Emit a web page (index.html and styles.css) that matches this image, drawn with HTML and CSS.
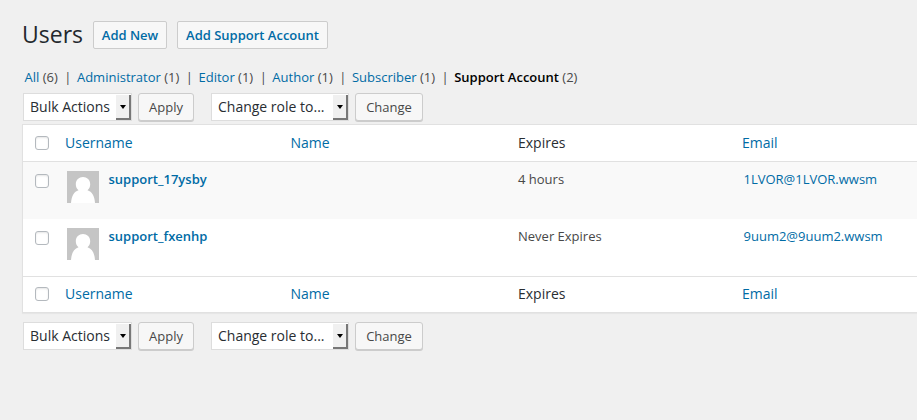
FILE: index.html
```html
<!DOCTYPE html>
<html lang="en">
<head>
<meta charset="utf-8">
<title>Users</title>
<link rel="stylesheet" href="styles.css">
</head>
<body>
<main class="wrap">
  <header class="page-head">
    <h1>Users</h1>
    <a class="title-action add-new">Add New</a>
    <a class="title-action add-support">Add Support Account</a>
  </header>
  <ul class="filters">
    <li><a>All</a> (6)</li>
    <li><a>Administrator</a> (1)</li>
    <li><a>Editor</a> (1)</li>
    <li><a>Author</a> (1)</li>
    <li><a>Subscriber</a> (1)</li>
    <li><b>Support Account</b> (2)</li>
  </ul>
  <div class="tablenav">
    <div class="select bulk"><span>Bulk Actions</span><i class="drop"></i></div>
    <button class="button apply">Apply</button>
    <div class="select role"><span>Change role to...</span><i class="drop"></i></div>
    <button class="button change">Change</button>
  </div>
  <section class="table">
    <div class="row head">
      <i class="check"></i><a>Username</a><a>Name</a><span>Expires</span><a>Email</a>
    </div>
    <div class="row user alt">
      <i class="check"></i>
      <div class="account">
        <svg class="avatar" viewBox="0 0 32 32"><rect width="32" height="32" fill="#c5c5c5"/><path d="M4 32C4.500 25 7 20.500 11.500 19.200 9.800 17.800 8.800 16 8.800 13.300 8.800 9 12 6 16 6s7.200 3 7.200 7.300c0 2.700-1 4.500-2.700 5.900C25 20.500 27.500 25 28 32z" fill="#fff"/></svg>
        <strong>support_17ysby</strong>
      </div>
      <span></span><span>4 hours</span><a class="mail">1LVOR@1LVOR.wwsm</a>
    </div>
    <div class="row user">
      <i class="check"></i>
      <div class="account">
        <svg class="avatar" viewBox="0 0 32 32"><rect width="32" height="32" fill="#c5c5c5"/><path d="M4 32C4.500 25 7 20.500 11.500 19.200 9.800 17.800 8.800 16 8.800 13.300 8.800 9 12 6 16 6s7.200 3 7.200 7.300c0 2.700-1 4.500-2.700 5.900C25 20.500 27.500 25 28 32z" fill="#fff"/></svg>
        <strong>support_fxenhp</strong>
      </div>
      <span></span><span>Never Expires</span><a class="mail">9uum2@9uum2.wwsm</a>
    </div>
    <div class="row foot">
      <i class="check"></i><a>Username</a><a>Name</a><span>Expires</span><a>Email</a>
    </div>
  </section>
  <div class="tablenav bottom">
    <div class="select bulk"><span>Bulk Actions</span><i class="drop"></i></div>
    <button class="button apply">Apply</button>
    <div class="select role"><span>Change role to...</span><i class="drop"></i></div>
    <button class="button change">Change</button>
  </div>
</main>
</body>
</html>
```
FILE: styles.css
```css
* { box-sizing: border-box; }
body {
  margin: 0;
  height: 420px;
  overflow: hidden;
  background: #f0f0f0;
  color: #484848;
  font: 13px/19px "Open Sans", sans-serif;
}
a, strong { color: #006ba5; }
.wrap { padding: 21px 0 0 22px; }
.page-head { display: flex; height: 28px; }
h1 {
  width: 71px;
  margin: 0;
  color: #23282d;
  font-size: 23px;
  font-weight: 400;
  line-height: 27px;
  white-space: nowrap;
}
.title-action {
  height: 28px;
  border: 1px solid #ccc;
  border-radius: 2px;
  background: #f7f7f7;
  font-weight: 600;
  line-height: 26px;
  text-align: center;
  white-space: nowrap;
}
.add-new { width: 74px; }
.add-support { width: 151px; margin-left: 10px; }
.filters {
  display: flex;
  margin: 19px 0 0 2.5px;
  padding: 0;
  list-style: none;
  white-space: nowrap;
}
.filters li + li::before { content: "|"; margin: 0 5.5px 0 6.5px; }
.filters b { color: #000; font-weight: 600; }
.tablenav { display: flex; height: 28px; margin: 6px 0 0 1px; }
.bottom { margin-top: 9px; }
.select {
  display: flex;
  justify-content: space-between;
  height: 28px;
  padding: 1px 0 1px 6px;
  border: 1px solid #ddd;
  background: #fff;
  color: #282d32;
  font-size: 14px;
  line-height: 24px;
  white-space: nowrap;
}
.bulk { width: 109px; }
.role { width: 138px; margin-left: 17px; }
.drop {
  display: grid;
  place-items: center;
  width: 15px;
  height: 25px;
  padding-left: 1px;
  border: solid #777;
  border-width: 0 2px 2px 0;
  background: #f0f0f0;
}
.drop::before {
  content: "";
  border: 3px solid transparent;
  border-top: 4px solid #000;
  border-bottom: 0;
}
.button {
  height: 28px;
  padding: 1px 0 0;
  border: 1px solid #ccc;
  border-radius: 3px;
  background: #f7f7f7;
  box-shadow: 0 1px 0 #ccc;
  color: #484848;
  font: 13px/25px "Open Sans", sans-serif;
}
.apply { width: 56px; margin-left: 6px; }
.change { width: 68px; margin-left: 6px; }
.table {
  width: 920px;
  margin-top: 3px;
  border: 1px solid #e1e1e1;
  box-shadow: 0 1px 1px rgba(0, 0, 0, .04);
  background: #fff;
}
.row {
  display: grid;
  grid-template-columns: 42px 225.5px 227.5px 224px 1fr;
  align-items: start;
}
.head, .foot { font-size: 14px; color: #282d32; }
.head { height: 37px; padding-top: 8px; border-bottom: 1px solid #e1e1e1; }
.foot { height: 36px; padding-top: 7px; border-top: 1px solid #e1e1e1; }
.user { height: 57px; padding-top: 8px; }
.alt { background: #f9f9f9; }
.check {
  width: 14px;
  height: 14px;
  margin: 3px 0 0 12px;
  border: 1px solid #b4b9be;
  border-radius: 3px;
  background: #fff;
  box-shadow: inset 0 1px 2px rgba(0, 0, 0, .1);
}
.user .check { margin-top: 4px; }
.account { display: flex; align-items: flex-start; padding-left: 2px; }
.avatar { width: 32px; height: 32px; margin: 1px 9.5px 0 0; }
strong { font-weight: 600; }
.mail { padding-left: 1.5px; }
```
